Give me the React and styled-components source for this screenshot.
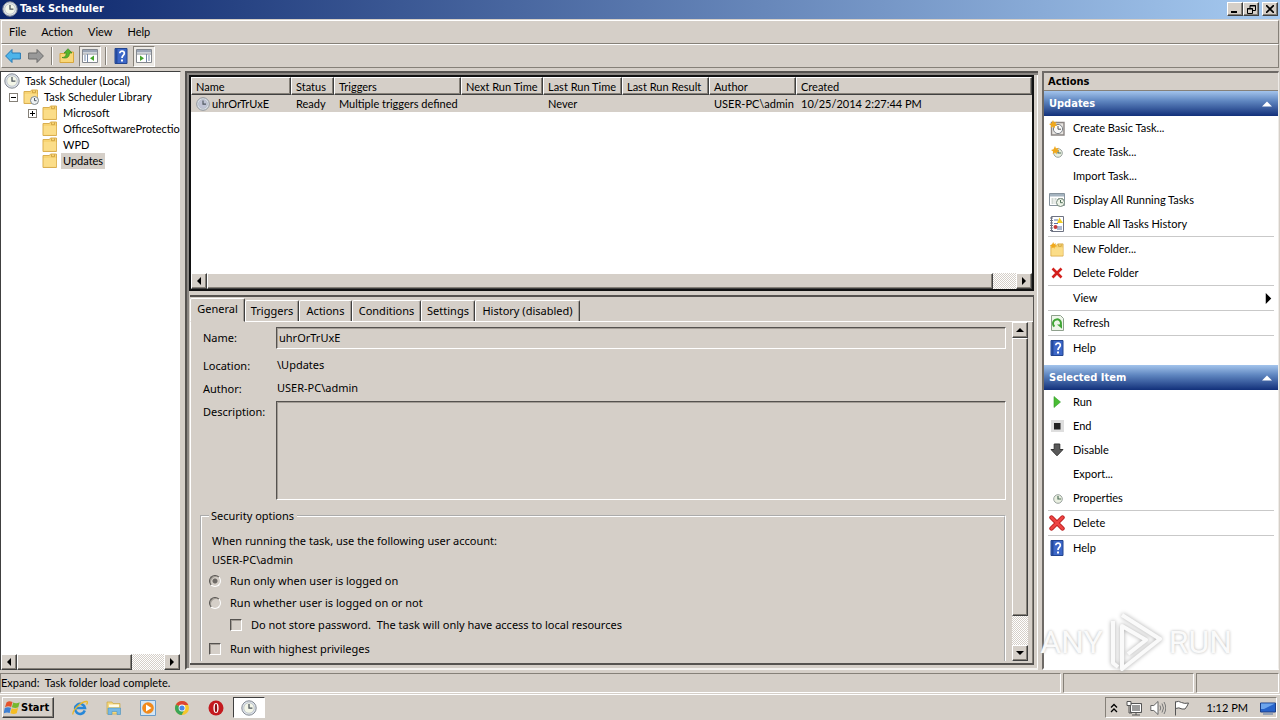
import React from "react";
import styled, { createGlobalStyle, css } from "styled-components";

const face = "#d5cfc8";
const ui = '"Lato", "Noto Sans", sans-serif';
const bold = '"DejaVu Sans Condensed", "DejaVu Sans", sans-serif';
const form = '"Noto Sans", "Open Sans", sans-serif';

const Global = createGlobalStyle`
  * { box-sizing: border-box; }
  body { margin: 0; background: ${face}; color: #000; font: 11px/16px ${ui}; }
  button { font: inherit; color: inherit; margin: 0; padding: 0; border: 0; background: none; }
  svg { display: block; flex: none; }
`;

const raised = css`
  background: ${face};
  border: 1px solid;
  border-color: #fff #404040 #404040 #fff;
  box-shadow: inset -1px -1px #858078;
`;
const sunken = css`
  border: 1px solid;
  border-color: #858078 #fff #fff #858078;
`;

const Page = styled.div`
  position: relative;
  display: flex;
  flex-direction: column;
  height: 100vh;
  overflow: hidden;
`;

/* ---------- title, menu, tool bar ---------- */
const TitleBar = styled.header`
  display: flex;
  align-items: center;
  height: 19px;
  padding: 0 2px 1px;
  flex: none;
  background: linear-gradient(90deg, #0a246a, #a6caf0);
  color: #fff;
  h1 { flex: 1; margin: 0 0 0 2px; font: bold 11px/16px ${bold}; }
`;
const CaptionButton = styled.button`
  ${raised}
  display: grid;
  place-items: center;
  width: 16px;
  height: 14px;
  margin-left: ${(p) => (p.$gap ? 3 : 0)}px;
  color: #000;
`;
const MenuBar = styled.nav`
  display: flex;
  align-items: center;
  flex: none;
  height: 24px;
  margin: 1px 1px 0;
  padding-left: 1px;
  border: 1px solid;
  border-color: #fff #858078 #858078 #fff;
  button { padding: 0 6px; margin-right: 3px; }
`;
const ToolBar = styled.div`
  display: flex;
  align-items: center;
  flex: none;
  gap: 1px;
  height: 24px;
  margin: 0 1px;
  border: 1px solid;
  border-color: #fff #858078 #858078 #fff;
`;
const Tool = styled.button`
  display: grid;
  place-items: center;
  width: 22px;
  height: 21px;
  ${(p) => p.$on && css`${sunken} background: #ece9e4;`}
`;
const Divider = styled.span`
  width: 2px;
  height: 18px;
  margin: 0 2px 0 3px;
  background: linear-gradient(90deg, #858078 1px, #fff 1px);
`;

/* ---------- three column body ---------- */
const Body = styled.main`
  display: grid;
  grid-template-columns: 181px minmax(0, 1fr) 238px;
  flex: 1;
  gap: 4px;
  min-height: 0;
  margin-top: 3px;
`;
const TreePane = styled.aside`
  display: flex;
  flex-direction: column;
  min-width: 0;
  background: #fff;
  border: 1px solid;
  border-color: #404040 #d5cfc8 #d5cfc8 #404040;
  border-bottom-width: 0;
`;
const Tree = styled.ul`
  flex: 1;
  margin: 0;
  padding: 1px 0 0;
  list-style: none;
  overflow: hidden;
`;
const Node = styled.li`
  display: flex;
  align-items: center;
  height: 16px;
  padding-left: ${(p) => p.$level * 19 + 3}px;
  white-space: nowrap;
`;
const NodeName = styled.button`
  height: 16px;
  padding: 0 2px;
  margin-left: 3px;
  background: ${(p) => (p.$selected ? face : "none")};
`;
const Expander = styled.button`
  display: grid;
  place-items: center;
  width: 9px;
  height: 9px;
  margin: 0 5px 0 -14px;
  border: 1px solid #858078;
`;

/* ---------- scroll bars ---------- */
const Scroll = styled.div`
  display: flex;
  flex: none;
  flex-direction: ${(p) => (p.$vertical ? "column" : "row")};
  ${(p) => (p.$vertical ? "width: 16px;" : "height: 16px;")}
  background: repeating-conic-gradient(#fff 0 25%, ${face} 0 50%) 0 0 / 2px 2px;
`;
const ScrollButton = styled.button`
  ${raised}
  display: grid;
  place-items: center;
  flex: none;
  width: 16px;
  height: 16px;
`;
const Thumb = styled.div`
  ${raised}
  flex: ${(p) => p.$size};
`;
const Track = styled.div`
  flex: ${(p) => p.$size};
`;

/* ---------- centre ---------- */
const Centre = styled.div`
  display: flex;
  flex-direction: column;
  min-width: 0;
  min-height: 0;
  padding: 2px 2px 3px 2px;
  border: 2px solid #55524f;
  border-right: 0;
  border-bottom-color: #f4f2ef;
  background: linear-gradient(#8b8783, #8b8783) 0 0 / 100% 2px no-repeat,
    linear-gradient(#8b8783, #8b8783) 0 0 / 2px 100% no-repeat,
    linear-gradient(#fff, #fff) 100% 0 / 1px 100% no-repeat, ${face};
`;
const ListPane = styled.section`
  display: flex;
  flex-direction: column;
  flex: none;
  height: 216px;
  margin-right: 2px;
  border: 2px solid #111;
  background: #fff;
`;
const TaskTable = styled.table`
  width: 100%;
  table-layout: fixed;
  border-collapse: separate;
  border-spacing: 0;
  white-space: nowrap;
  th, td { height: 17px; padding: 0 0 0 5px; font-weight: normal; text-align: left; line-height: 15px; }
  th { ${raised} height: 18px; padding-left: 4px; }
  td { background: ${face}; }
`;
const TaskName = styled.span`
  display: flex;
  align-items: center;
  gap: 2px;
`;
const ListSpace = styled.div`
  flex: 1;
`;
const Details = styled.section`
  display: flex;
  flex-direction: column;
  flex: 1;
  min-height: 0;
  margin: 4px 2px 0 1px;
  border: solid #55524f;
  border-width: 2px 1px 2px 0;
  font: 11px/16px ${form};
`;
const Tabs = styled.div`
  display: flex;
  align-items: flex-end;
  flex: none;
  height: 25px;
  border-bottom: 1px solid #fff;
`;
const Tab = styled.button`
  flex: none;
  width: ${(p) => p.$w}px;
  height: ${(p) => (p.$active ? 24 : 21)}px;
  margin-bottom: ${(p) => (p.$active ? -1 : 0)}px;
  padding-bottom: ${(p) => (p.$active ? 3 : 0)}px;
  background: ${face};
  border: 1px solid;
  border-color: #fff #404040 transparent #fff;
  border-bottom-width: ${(p) => (p.$active ? 1 : 0)}px;
  border-radius: 2px 2px 0 0;
  box-shadow: inset -1px 0 #a39d96;
  white-space: nowrap;
`;
const TabBody = styled.div`
  display: flex;
  flex: 1;
  min-height: 0;
  padding: 0 4px 2px 0;
  border-left: 1px solid #fff;
  border-right: 1px solid #858078;
`;
const FormArea = styled.form`
  flex: 1;
  min-width: 0;
  padding: 5px 6px 0 9px;
  overflow: hidden;
`;
const Fields = styled.div`
  display: grid;
  grid-template-columns: 76px minmax(0, 1fr);
  grid-template-rows: 28px 23px 23px 99px;
  label { padding: 3px 0 0 3px; }
  output { padding: 2px 0 0 1px; }
`;
const field = css`
  width: 100%;
  margin: 0;
  padding: 0 2px 2px;
  background: ${face};
  border: 1px solid;
  border-color: #55524f #fff #fff #55524f;
  box-shadow: inset 1px 1px #a39d96;
  border-radius: 0;
  outline: 0;
  font: inherit;
  color: #000;
`;
const TextField = styled.input`
  ${field}
  height: 22px;
`;
const TextArea = styled.textarea`
  ${field}
  height: 99px;
  resize: none;
`;
const Group = styled.fieldset`
  height: 200px;
  min-width: 0;
  margin: 8px 0 0;
  padding: 7px 7px 0;
  border: 2px groove #fff;
  legend { padding: 0 3px 0 2px; height: 16px; }
  p { margin: 0; padding-left: 3px; line-height: 19px; }
  p:last-of-type { margin-bottom: 1px; }
`;
const Choice = styled.label`
  display: flex;
  align-items: center;
  gap: 9px;
  height: 22px;
  margin-left: ${(p) => (p.$indent ? 21 : 0)}px;
  margin-top: ${(p) => (p.$gap ? 2 : 0)}px;
  white-space: pre;
  input {
    appearance: none;
    flex: none;
    width: 12px;
    height: 12px;
    margin: 0;
    border: 1px solid;
    border-color: #55524f #fff #fff #55524f;
    box-shadow: inset 1px 1px #a39d96;
  }
  input[type="radio"] { border-radius: 50%; }
  input[type="radio"]:checked { background: radial-gradient(circle, #6e6a66 2px, transparent 3px); }
`;

/* ---------- actions ---------- */
const ActionPane = styled.aside`
  min-width: 0;
  margin-right: 1px;
  background: #fff;
  border: 2px solid;
  border-color: #6e6a66 #efece8 #fff #6e6a66;
  border-right-width: 1px;
  h2 { margin: 0; height: 18px; padding-left: 4px; background: ${face}; border-bottom: 1px solid #858078; font: bold 11px/18px ${bold}; }
`;
const SectionHead = styled.button`
  display: flex;
  align-items: center;
  justify-content: space-between;
  width: 100%;
  height: 25px;
  margin-top: ${(p) => (p.$gap ? 5 : 0)}px;
  padding: 0 6px 0 5px;
  background: linear-gradient(#a3c4ec, #5f86c0 40%, #12307a);
  color: #fff;
  font: bold 11px/16px ${bold};
`;
const ActionList = styled.ul`
  margin: 0;
  padding: 0 4px;
  list-style: none;
`;
const ActionItem = styled.li`
  border-bottom: ${(p) => (p.$rule ? "1px solid #c9c9c9" : "0")};
`;
const ActionButton = styled.button`
  display: grid;
  grid-template-columns: 16px 1fr auto;
  gap: 8px;
  align-items: center;
  width: 100%;
  height: 24px;
  padding: 0 0 0 1px;
  text-align: left;
`;

/* ---------- status and task bar ---------- */
const StatusBar = styled.footer`
  display: grid;
  grid-template-columns: 1fr 131px 83px;
  gap: 2px;
  flex: none;
  height: 21px;
  margin: 3px 1px 0 0;
  span { ${sunken} height: 20px; line-height: 18px; white-space: pre; }
`;
const TaskBar = styled.footer`
  display: flex;
  align-items: center;
  flex: none;
  height: 26px;
  padding: 0 3px 0 2px;
  border-top: 1px solid #fff;
`;
const Start = styled.button`
  ${raised}
  display: flex;
  align-items: center;
  gap: 1px;
  width: 52px;
  height: 21px;
  padding-left: 1px;
  margin-right: 9px;
  font: bold 11px/16px ${bold};
`;
const Launch = styled.button`
  display: grid;
  place-items: center;
  width: ${(p) => (p.$on ? 32 : 34)}px;
  height: 21px;
  ${(p) => p.$on && css`${sunken} background: #fff; border-color: #404040 #fff #fff #404040;`}
`;
const Tray = styled.div`
  ${sunken}
  display: flex;
  align-items: center;
  gap: 8px;
  height: 21px;
  margin-left: auto;
  padding: 0 0 0 4px;
  time { margin: 0 4px 0 8px; }
`;
const Watermark = styled.div`
  position: absolute;
  right: 48px;
  bottom: 48px;
  display: flex;
  align-items: center;
  gap: 5px;
  color: #fafafa;
  font: 32px/60px "Roboto", sans-serif;
  text-shadow: 0 0 3px #b5b5b5;
  pointer-events: none;
`;

/* ---------- drawings ---------- */
const Svg = ({ s = 16, children, ...rest }) => (
  <svg width={s} height={s} viewBox="0 0 16 16" fill="none" aria-hidden="true" {...rest}>{children}</svg>
);
const Clock = ({ s, face: fill = "#f3f6e8" }) => (
  <Svg s={s}>
    <circle cx="8" cy="8" r="7.2" fill="#dce2ea" stroke="#858b93" />
    <circle cx="8" cy="8" r="5.2" fill={fill} stroke="#b4bac0" strokeWidth=".7" />
    <path d="M8 4v4.2h3.4" stroke="#4d565e" strokeWidth="1.3" />
  </Svg>
);
const smallClock = (
  <>
    <circle cx="9" cy="9" r="4.3" fill="#e9efe0" stroke="#9aa39f" />
    <path d="M9 6v3h3" stroke="#4e6e58" strokeWidth="1.2" />
  </>
);
const spark = <path d="M4 0l1 2.400L7.600 1.700 6.500 4l2 1.500-2.500.5-.5 2.500L4 6.600 1.700 8l.4-2.500L0 4l2.500-.8z" fill="#f0a81c" />;
const FolderShape = () => (
  <>
    <path d="M1 2.500h6.500l1-1.500h6v13.500H1z" fill="#f8d473" stroke="#d9ae50" />
    <path d="M1.800 5h12.400v8.700H1.800z" fill="#fbdd88" />
    <path d="M9.500 1.500v2.200h3V1.500" stroke="#c79a3a" strokeWidth=".8" />
  </>
);
const Folder = () => <Svg><FolderShape /></Svg>;
const LibraryIcon = () => (
  <Svg>
    <FolderShape />
    <circle cx="11.500" cy="11.500" r="4" fill="#eef2f3" stroke="#7f888e" />
    <path d="M11.500 9v2.700h2" stroke="#4d565e" />
  </Svg>
);
const Book = () => (
  <Svg>
    <path d="M2 .5h12v15H2z" fill="#3c67c8" stroke="#23458f" />
    <path d="M2.500 1h2v14h-2z" fill="#254a9c" />
    <path d="M6.800 5.300c0-3 4.700-2.800 4.500.1C11.200 7.600 9 7.400 9 10" stroke="#fff" strokeWidth="1.700" />
    <path d="M8 11.500h2v2H8z" fill="#fff" />
  </Svg>
);
const ArrowIcon = ({ fill, edge, flip }) => (
  <Svg><path transform={flip ? "matrix(-1 0 0 1 16 0)" : undefined} d="M.6 8L7 1.500v3.500h8.400v6H7v3.500z" fill={fill} stroke={edge} /></Svg>
);
const UpIcon = () => (
  <Svg>
    <path d="M1 5.500h5l1-1.500h7.500v10.500H1z" fill="#f9d778" stroke="#d8a63c" />
    <path d="M3 9.500c3.500 0 4-2 4.200-4.500H5l4-4.300L13 5h-2.500C10.400 9 8 11 3 9.500z" fill="#55b52c" stroke="#38861d" strokeWidth=".7" />
  </Svg>
);
const PaneIcon = ({ right }) => (
  <Svg>
    <path d="M.5 1.500h15v13H.5z" fill="#fff" stroke="#84888f" />
    <path d="M1 2h14v2.500H1z" fill="#9ba5b5" />
    <path d="M1 6h14" stroke="#84888f" />
    <path d={right ? "M10.500 6v8M12 8h2M12 10h2M12 12h2" : "M5.500 6v8M2 8h2M2 10h2M2 12h2"} stroke="#7488a8" />
    <path d={right ? "M4 7.500l4 2.700L4 13z" : "M12 7.500l-4 2.700 4 2.800z"} fill="#45a52c" />
  </Svg>
);
const BasicTask = () => (
  <Svg>
    <path d="M2.500 2.500h12.500v12.500h-12.500z" fill="#e7e4e0" stroke="#8b8583" strokeWidth="1.400" />
    <circle cx="9" cy="9" r="4.600" fill="#fafafa" stroke="#7d8288" />
    <path d="M9 6v3.200h3" stroke="#555" />
    {spark}
  </Svg>
);
const NewTask = () => <Svg>{smallClock}<g transform="translate(2 2)">{spark}</g></Svg>;
const PropertiesIcon = () => <Svg>{smallClock}</Svg>;
const Running = () => (
  <Svg>
    <path d="M.5 1.500h15v12H.5z" fill="#fff" stroke="#87939d" />
    <path d="M1 2h14v2.500H1z" fill="#a4b3bf" />
    <path d="M2.500 7h5M2.500 9h4M2.500 11h4M9 6.500h5" stroke="#a3b0a6" strokeDasharray="2 1" />
    <circle cx="11.500" cy="10.500" r="4" fill="#eef4e8" stroke="#708477" />
    <path d="M11.500 8v2.700h2.300" stroke="#4e6e58" />
  </Svg>
);
const History = () => (
  <Svg>
    <path d="M2.500.5h12v15h-12z" fill="#fff" stroke="#6d7282" />
    <path d="M1 2h3M1 4.500h3M1 7h3M1 9.500h3M1 12h3M1 14.500h3" stroke="#6d7282" />
    <path d="M5 4h4M5 7.500h4M8 11h5M8 13h5" stroke="#5870a5" />
    <path d="M10.500 1.500L14 7H8z" fill="#f0cd23" />
    <circle cx="6.500" cy="11" r="2" fill="#c43a3a" />
  </Svg>
);
const NewFolder = () => <Svg><g transform="translate(1 2) scale(.9)"><FolderShape /></g><g transform="translate(1 1) scale(.8)">{spark}</g></Svg>;
const SmallX = () => <Svg><path d="M3.500 3.500l9 9M12.500 3.500l-9 9" stroke="#d3201c" strokeWidth="2.600" /></Svg>;
const BigX = () => (
  <Svg>
    <path d="M2.500 2.500l11 11M13.500 2.500l-11 11" stroke="#b81a1a" strokeWidth="4.400" strokeLinecap="round" />
    <path d="M2.500 2.500l11 11M13.500 2.500l-11 11" stroke="#ee4544" strokeWidth="2.600" strokeLinecap="round" />
  </Svg>
);
const RefreshIcon = () => (
  <Svg>
    <path d="M2.500.5h9l3 3v12h-12z" fill="#eef6ea" stroke="#8ea08c" />
    <path d="M5.500 11.500A4 4 0 1 1 11 11" stroke="#3fa535" strokeWidth="2" />
    <path d="M8 9.500h5v4.300z" fill="#3fa535" />
  </Svg>
);
const RunIcon = () => <Svg><path d="M5 2.500l6.500 5.500L5 13.500z" fill="#49bd34" stroke="#2f9a26" strokeWidth=".6" /></Svg>;
const EndIcon = () => <Svg><path d="M2 2h13v12H2z" fill="#dedede" /><path d="M5 5h6.500v6.500H5z" fill="#222" /></Svg>;
const DisableIcon = () => <Svg><path d="M5.200 2h5.600v5.500H14L8 13.800 2 7.500h3.200z" fill="#5a5a5a" stroke="#333" /></Svg>;
const Tri = ({ dir = "right", fill = "#000", s = 8 }) => (
  <svg width={s} height={s} viewBox="0 0 8 8" aria-hidden="true">
    <path fill={fill} d={{ right: "M2 0l4 4-4 4z", left: "M6 0L2 4l4 4z", up: "M0 6l4-4 4 4z", down: "M0 2l4 4 4-4z" }[dir]} />
  </svg>
);
const Flag = () => (
  <Svg>
    <path d="M2.500 2.500c2.200-1.700 4-1.200 6-.4L7.200 7C5.500 6.200 3.200 6 1 7.200z" fill="#e5532b" />
    <path d="M9.200 2.500c2 .9 4.300.9 6.500-.3L14.300 7.300c-2 1-4.200.8-6.400 0z" fill="#76b82e" />
    <path d="M.8 8c2.200-1.200 4.300-1 6.200-.2l-1.300 5.200C3.800 12.200 1.800 12.200-.4 13.400z" fill="#3f80d2" />
    <path d="M7.700 8.200c2 .9 4.200.9 6.400-.1l-1.400 5.200c-2 1-4.200.9-6.300 0z" fill="#f5bd23" />
  </Svg>
);
const IE = () => (
  <Svg>
    <path d="M12.800 10.500A5 5 0 1 1 13 8H4.500" stroke="#2787d8" strokeWidth="2.500" />
    <path d="M1 14.500C0 11 9 1 15 1.500c1 .3.300 2-.5 3" stroke="#e9b92c" strokeWidth="1.300" />
  </Svg>
);
const Explorer = () => (
  <Svg>
    <path d="M1 2h5l1 1.500h7V14H1z" fill="#f5d77d" stroke="#c9a748" strokeWidth=".7" />
    <path d="M3 4.500h10V7H3z" fill="#fffbe8" />
    <path d="M2 8h12.500v6.500H11v-3H6v3H2z" fill="#76b8e5" stroke="#4c93c5" strokeWidth=".6" />
  </Svg>
);
const Player = () => (
  <Svg>
    <path d="M.5.5h15v15H.5z" fill="#d4e6f5" stroke="#6a9cca" />
    <circle cx="8" cy="8" r="5.800" fill="#f28a1c" />
    <path d="M6 4.500L11.500 8 6 11.500z" fill="#fff" />
  </Svg>
);
const Chrome = () => (
  <Svg>
    <circle cx="8" cy="8" r="7" fill="#f5c62c" />
    <path d="M8 8L1.900 4.500A7 7 0 0 1 14.300 5H8z" fill="#dc4434" />
    <path d="M8 8L1.900 4.500A7 7 0 0 0 7.600 15l3-5.500z" fill="#3ba557" />
    <circle cx="8" cy="8" r="3.400" fill="#fff" />
    <circle cx="8" cy="8" r="2.600" fill="#4a87e8" />
  </Svg>
);
const Opera = () => <Svg><circle cx="8" cy="8" r="7.500" fill="#c41a1f" /><ellipse cx="8" cy="8" rx="2.600" ry="5" fill="#fff" /><ellipse cx="8" cy="8" rx="1.200" ry="4.300" fill="#8c1014" /></Svg>;
const Network = () => (
  <Svg>
    <path d="M4.500 3.500h11v9h-11z" fill="#9b9b9b" stroke="#555" />
    <path d="M5.500 4.500h9v7h-9z" stroke="#fff" />
    <path d="M6 15h8M10 12.500V15" stroke="#555" />
    <path d="M1 1.500h4v4H1z" fill="#fff" stroke="#555" />
    <path d="M3 5.500V13h3" stroke="#555" />
  </Svg>
);
const Speaker = () => (
  <Svg>
    <path d="M.8 5.500h3L8 1.500v13l-4.200-4h-3z" fill="#fff" stroke="#666" />
    <path d="M10 5.500q1.500 2.500 0 5M12 3.500q3 4.500 0 9M14 2q3.500 6 0 12" stroke="#777" />
  </Svg>
);
const FlagIcon = () => <Svg><path d="M1.500 15.500V1.500M1.500 2q3-1.500 6 .5 3 1.500 7 .5-1 3-3.500 6H8q-3-2-6.500-.5" fill="#fff" stroke="#555" /></Svg>;
const Monitor = () => <Svg><path d="M.5 3h15v9H.5z" fill="#2763c9" stroke="#1a3f88" /><path d="M1 3.500h14L4 9H1z" fill="#6da5ec" /><path d="M3 14h10" stroke="#93a0b4" strokeWidth="2" /></Svg>;

/* ---------- data ---------- */
const columns = [["Name", 100], ["Status", 43], ["Triggers", 127], ["Next Run Time", 82], ["Last Run Time", 79], ["Last Run Result", 87], ["Author", 87], ["Created"]];
const tabs = [["General", 55], ["Triggers", 54], ["Actions", 53], ["Conditions", 69], ["Settings", 54], ["History (disabled)", 105]];
const updates = [
  ["Create Basic Task...", BasicTask], ["Create Task...", NewTask], ["Import Task..."], ["Display All Running Tasks", Running],
  ["Enable All Tasks History", History, true], ["New Folder...", NewFolder], ["Delete Folder", SmallX, true],
  ["View", null, true, true], ["Refresh", RefreshIcon, true], ["Help", Book],
];
const selected = [
  ["Run", RunIcon], ["End", EndIcon], ["Disable", DisableIcon], ["Export..."], ["Properties", PropertiesIcon, true],
  ["Delete", BigX, true], ["Help", Book],
];

const Actions = ({ items }) => (
  <ActionList>
    {items.map(([label, Icon, rule, more]) => (
      <ActionItem key={label} $rule={rule}>
        <ActionButton>{Icon ? <Icon /> : <span />}<span>{label}</span>{more && <Tri s={11} />}</ActionButton>
      </ActionItem>
    ))}
  </ActionList>
);
const ScrollBar = ({ vertical, thumb, rest }) => (
  <Scroll $vertical={vertical}>
    <ScrollButton type="button" aria-label={vertical ? "Scroll up" : "Scroll left"}><Tri dir={vertical ? "up" : "left"} /></ScrollButton>
    <Thumb $size={thumb} />
    <Track $size={rest} />
    <ScrollButton type="button" aria-label={vertical ? "Scroll down" : "Scroll right"}><Tri dir={vertical ? "down" : "right"} /></ScrollButton>
  </Scroll>
);
const Expand = ({ open }) => (
  <Expander aria-label={open ? "Collapse" : "Expand"}>
    <svg width="7" height="7" viewBox="0 0 7 7"><path d={open ? "M1 3.500h5" : "M1 3.500h5M3.500 1v5"} stroke="#000" /></svg>
  </Expander>
);

export default function App() {
  return (
    <Page>
      <Global />
      <TitleBar>
        <Clock />
        <h1>Task Scheduler</h1>
        <CaptionButton aria-label="Minimize"><svg width="8" height="8"><path d="M0 6h6v2H0z" /></svg></CaptionButton>
        <CaptionButton aria-label="Restore">
          <svg width="9" height="9" fill="none" stroke="#000"><path d="M3 3V.5h5.500v5H6M3 1h6M.5 3.500h5v5h-5zM0 4h6" /></svg>
        </CaptionButton>
        <CaptionButton aria-label="Close" $gap><svg width="8" height="8"><path d="M0 0l8 8M8 0L0 8" stroke="#000" strokeWidth="1.600" /></svg></CaptionButton>
      </TitleBar>
      <MenuBar>{["File", "Action", "View", "Help"].map((m) => <button key={m}>{m}</button>)}</MenuBar>
      <ToolBar>
        <Tool aria-label="Back"><ArrowIcon fill="#4db4ea" edge="#2679b5" /></Tool>
        <Tool aria-label="Forward"><ArrowIcon fill="#999" edge="#6b6b6b" flip /></Tool>
        <Divider />
        <Tool aria-label="Up one level"><UpIcon /></Tool>
        <Tool aria-label="Console tree" $on><PaneIcon /></Tool>
        <Divider />
        <Tool aria-label="Help"><Book /></Tool>
        <Tool aria-label="Action pane" $on><PaneIcon right /></Tool>
      </ToolBar>

      <Body>
        <TreePane>
          <Tree>
            <Node $level={0}><Clock /><NodeName>Task Scheduler (Local)</NodeName></Node>
            <Node $level={1}><Expand open /><LibraryIcon /><NodeName>Task Scheduler Library</NodeName></Node>
            <Node $level={2}><Expand /><Folder /><NodeName>Microsoft</NodeName></Node>
            <Node $level={2}><Folder /><NodeName>OfficeSoftwareProtectio</NodeName></Node>
            <Node $level={2}><Folder /><NodeName>WPD</NodeName></Node>
            <Node $level={2}><Folder /><NodeName $selected>Updates</NodeName></Node>
          </Tree>
          <ScrollBar thumb={113} rest={32} />
        </TreePane>

        <Centre>
          <ListPane>
            <TaskTable>
              <colgroup>{columns.map(([c, w]) => <col key={c} width={w} />)}</colgroup>
              <thead><tr>{columns.map(([c]) => <th key={c}>{c}</th>)}</tr></thead>
              <tbody>
                <tr>
                  <td><TaskName><Clock s={14} face="#bfc3d4" />uhrOrTrUxE</TaskName></td>
                  <td>Ready</td><td>Multiple triggers defined</td><td /><td>Never</td><td /><td>USER-PC\admin</td><td>10/25/2014 2:27:44 PM</td>
                </tr>
              </tbody>
            </TaskTable>
            <ListSpace />
            <ScrollBar thumb={786} rest={23} />
          </ListPane>

          <Details>
            <Tabs role="tablist">
              {tabs.map(([t, w], i) => <Tab key={t} role="tab" aria-selected={i === 0} $w={w} $active={i === 0}>{t}</Tab>)}
            </Tabs>
            <TabBody>
              <FormArea>
                <Fields>
                  <label htmlFor="name">Name:</label>
                  <TextField id="name" readOnly value="uhrOrTrUxE" />
                  <label htmlFor="location">Location:</label>
                  <output id="location">\Updates</output>
                  <label htmlFor="author">Author:</label>
                  <output id="author">USER-PC\admin</output>
                  <label htmlFor="description">Description:</label>
                  <TextArea id="description" readOnly value="" />
                </Fields>
                <Group>
                  <legend>Security options</legend>
                  <p>When running the task, use the following user account:</p>
                  <p>USER-PC\admin</p>
                  <Choice><input type="radio" name="logon" defaultChecked />Run only when user is logged on</Choice>
                  <Choice><input type="radio" name="logon" />Run whether user is logged on or not</Choice>
                  <Choice $indent><input type="checkbox" />{"Do not store password.  The task will only have access to local resources"}</Choice>
                  <Choice $gap><input type="checkbox" />Run with highest privileges</Choice>
                </Group>
              </FormArea>
              <ScrollBar vertical thumb={279} rest={29} />
            </TabBody>
          </Details>
        </Centre>

        <ActionPane>
          <h2>Actions</h2>
          <SectionHead>Updates<Tri dir="up" fill="#fff" s={10} /></SectionHead>
          <Actions items={updates} />
          <SectionHead $gap>Selected Item<Tri dir="up" fill="#fff" s={10} /></SectionHead>
          <Actions items={selected} />
        </ActionPane>
      </Body>

      <StatusBar><span>{"Expand:  Task folder load complete."}</span><span /><span /></StatusBar>
      <TaskBar>
        <Start><Flag />Start</Start>
        <Launch aria-label="Internet Explorer"><IE /></Launch>
        <Launch aria-label="Explorer"><Explorer /></Launch>
        <Launch aria-label="Media Player"><Player /></Launch>
        <Launch aria-label="Chrome"><Chrome /></Launch>
        <Launch aria-label="Opera"><Opera /></Launch>
        <Launch aria-label="Task Scheduler" $on><Clock /></Launch>
        <Tray>
          <svg width="8" height="10" fill="none" stroke="#000" strokeWidth="1.300"><path d="M1 4.500l3-3 3 3M1 9l3-3 3 3" /></svg>
          <Network /><Speaker /><FlagIcon /><time>1:12 PM</time><Monitor />
        </Tray>
      </TaskBar>

      <Watermark>
        <span>ANY</span>
        <svg width="56" height="60" viewBox="0 0 56 60" fill="none" stroke="#fafafa" strokeWidth="4" strokeLinejoin="round" style={{ filter: "drop-shadow(0 0 2px #aaa)" }}>
          <path d="M14 3l38 24-38 30V14l24 14-18 14" /><path d="M5 9v42l5 4" />
        </svg>
        <span>RUN</span>
      </Watermark>
    </Page>
  );
}
